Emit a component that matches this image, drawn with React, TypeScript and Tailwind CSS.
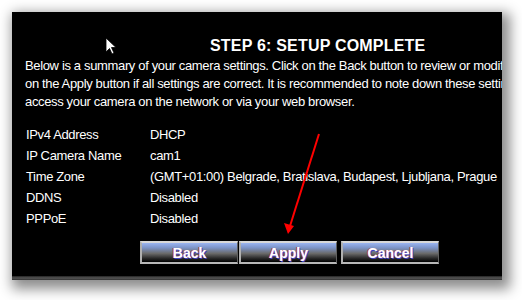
import React from "react";

const rows: [string, string][] = [
  ["IPv4 Address", "DHCP"],
  ["IP Camera Name", "cam1"],
  ["Time Zone", "(GMT+01:00) Belgrade, Bratislava, Budapest, Ljubljana, Prague"],
  ["DDNS", "Disabled"],
  ["PPPoE", "Disabled"],
];

function WizardButton({ label }: { label: string }) {
  return (
    <button className="h-[23px] w-[98px] border-t-2 border-l-2 border-b-2 border-r border-t-[#d8d8d8] border-l-[#b0b0b0] border-b-[#b8b8b8] border-r-[#606060] bg-[linear-gradient(to_bottom,#9ab4f0_0%,#7d94c8_25%,#6a6a6a_55%,#2a2a2a_80%,#000_100%)] text-[14px] font-bold leading-none text-white [text-shadow:1px_1px_0_#4040c0,-1px_0_0_#c04040]">
      {label}
    </button>
  );
}

export default function App() {
  return (
    <div className="h-[300px] w-[522px] overflow-hidden bg-white p-3 font-['Liberation_Sans',Arial,sans-serif]">
      <div className="relative flex h-[268px] w-[490px] flex-col overflow-hidden bg-black text-white shadow-[4px_5px_12px_4px_rgba(0,0,0,0.45)]">
        <h1 className="mt-[24px] pl-[198px] text-[16px] font-bold leading-[19px] tracking-[0.2px] whitespace-nowrap">
          STEP 6: SETUP COMPLETE
        </h1>
        <p className="mt-[2px] pl-[13px] text-[13px] leading-[18px] tracking-[-0.35px] whitespace-nowrap">
          Below is a summary of your camera settings. Click on the Back button to review or modify settings or click
          <br />
          on the Apply button if all settings are correct. It is recommended to note down these settings in order to
          <br />
          access your camera on the network or via your web browser.
        </p>
        <div className="mt-[13px] flex flex-col pl-[14px] text-[13px] leading-[21px] tracking-[-0.35px]">
          {rows.map(([k, v]) => (
            <div key={k} className="flex whitespace-nowrap">
              <span className="w-[124px] shrink-0">{k}</span>
              <span>{v}</span>
            </div>
          ))}
        </div>
        <div className="mt-[12px] flex gap-[1px] pl-[128px]">
          <WizardButton label="Back" />
          <WizardButton label="Apply" />
          <div className="w-[2px]" />
          <WizardButton label="Cancel" />
        </div>
        <div className="mt-auto h-[4px] bg-[linear-gradient(to_bottom,#222,#555,#333)]" />

        <svg className="absolute left-[93px] top-[25px]" width="14" height="20" viewBox="0 0 14 20">
          <path d="M1 1 L1 15 L4.5 11.5 L7 17 L9 16 L6.5 10.5 L11 10.5 Z" fill="#fff" stroke="#000" strokeWidth="0.8" />
        </svg>
        <svg className="absolute left-0 top-0" width="490" height="268" viewBox="0 0 490 268">
          <line x1="307" y1="122" x2="278" y2="214" stroke="#ff0000" strokeWidth="2" />
          <path d="M276 222 L272 211 L282 214 Z" fill="#ff0000" />
        </svg>
      </div>
    </div>
  );
}
